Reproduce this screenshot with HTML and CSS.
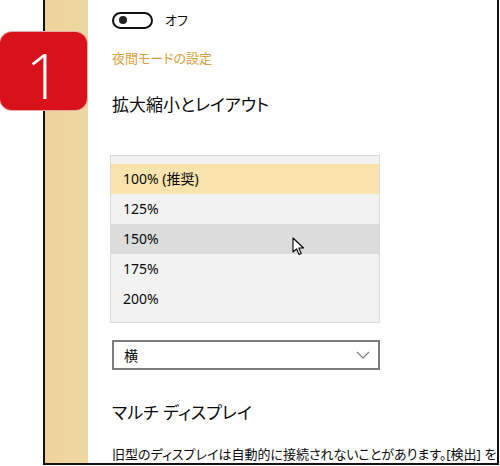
FILE: index.html
```html
<!DOCTYPE html>
<html lang="ja">
<head>
<meta charset="utf-8">
<link rel="stylesheet" href="styles.css">
</head>
<body>
<div class="window">
  <div class="sidebar"></div>
  <div class="content">
    <div class="toggle-row">
      <span class="toggle"><span class="knob"></span></span>
      <span class="toggle-label">オフ</span>
    </div>
    <div class="link">夜間モードの設定</div>
    <div class="heading">拡大縮小とレイアウト</div>
    <div class="listbox">
      <div class="item selected">100% (推奨)</div>
      <div class="item">125%</div>
      <div class="item hover">150%
        <svg class="cursor" width="13" height="19" viewBox="0 0 13 19"><path d="M1 1 L1 15 L4.5 11.8 L7 17.5 L9.2 16.5 L6.8 11 L11.5 11 Z" fill="#fff" stroke="#000" stroke-width="1.1" stroke-linejoin="round"/></svg>
      </div>
      <div class="item">175%</div>
      <div class="item">200%</div>
    </div>
    <div class="combo">
      <span>横</span>
      <svg class="chev" width="14" height="8" viewBox="0 0 14 8"><path d="M1 1 L7 7 L13 1" fill="none" stroke="#7a7a7a" stroke-width="1.1"/></svg>
    </div>
    <div class="heading heading2">マルチ ディスプレイ</div>
    <div class="desc">旧型のディスプレイは自動的に接続されないことがあります。[検出] を</div>
  </div>
</div>
<div class="badge">1</div>
</body>
</html>
```

FILE: styles.css
```css
html, body {
  margin: 0;
  padding: 0;
  background: #fff;
}
body {
  width: 500px;
  height: 466px;
  overflow: hidden;
  position: relative;
  font-family: "Noto Sans", "Noto Sans CJK JP", sans-serif;
  font-feature-settings: "palt";
  color: #0a0a0a;
}
.window {
  margin-left: 43px;
  width: 452px;
  height: 463px;
  border-left: 2px solid #111;
  border-right: 2px solid #111;
  border-bottom: 2px solid #111;
  display: flex;
  overflow: hidden;
  background: #fff;
}
.sidebar {
  width: 43px;
  flex: none;
  background: linear-gradient(90deg, #eed39a, #f0d7a2);
}
.content {
  flex: 1;
  padding-left: 24px;
  min-width: 0;
}
.toggle-row {
  display: flex;
  align-items: center;
  height: 20px;
  margin-top: 10px;
}
.toggle {
  box-sizing: border-box;
  width: 41px;
  height: 17px;
  border: 2px solid #111;
  border-radius: 9px;
  display: flex;
  align-items: center;
  padding-left: 5px;
}
.knob {
  width: 8px;
  height: 8px;
  border-radius: 50%;
  background: #222;
}
.toggle-label {
  margin-left: 12px;
  font-size: 13px;
  line-height: 20px;
}
.link {
  margin-top: 18px;
  font-size: 13px;
  line-height: 20px;
  color: #d9a23c;
}
.heading {
  margin-top: 25px;
  font-size: 17px;
  line-height: 24px;
}
.listbox {
  margin-top: 38px;
  margin-left: -2px;
  width: 268px;
  border: 1px solid #dadada;
  background: #f2f2f2;
  padding: 8px 0;
}
.item {
  height: 30px;
  line-height: 30px;
  padding-left: 12px;
  font-size: 14px;
  position: relative;
}
.item.selected {
  background: #fbe3ad;
}
.item.hover {
  background: #dcdcdc;
}
.cursor {
  position: absolute;
  left: 181px;
  top: 13px;
}
.combo {
  box-sizing: border-box;
  margin-top: 17px;
  width: 268px;
  height: 30px;
  border: 2px solid #7c7c7c;
  display: flex;
  align-items: center;
  justify-content: space-between;
  padding: 0 8px 0 10px;
  font-size: 14px;
}
.heading2 {
  margin-top: 31px;
}
.desc {
  margin-top: 20px;
  font-size: 13px;
  line-height: 18px;
  white-space: nowrap;
}
.badge {
  position: absolute;
  left: 0;
  top: 32px;
  box-sizing: border-box;
  width: 87px;
  height: 78px;
  padding-top: 8px;
  border-radius: 12px;
  background: #d8111b;
  color: #fff;
  font-family: "Open Sans", "Noto Sans", sans-serif;
  font-weight: 300;
  font-size: 62px;
  line-height: 70px;
  text-align: center;
  box-shadow: 0 0 0 1px #e9a8a0;
}
```
